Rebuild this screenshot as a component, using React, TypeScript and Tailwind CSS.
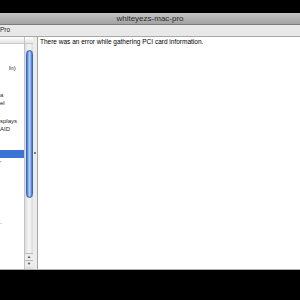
const SANS = "font-['Liberation_Sans','Helvetica',sans-serif]";

type Row = { h: number; text?: string; pl?: number; selected?: boolean };

const ROWS: Row[] = [
  { h: 20 },
  { h: 8, text: "ln)", pl: 9 },
  { h: 19 },
  { h: 8, text: "a" },
  { h: 8, text: "el" },
  { h: 10 },
  { h: 8, text: "splays" },
  { h: 8, text: "AID" },
  { h: 17 },
  { h: 8, selected: true },
  { h: 1 },
  { h: 8, text: "'" },
  { h: 52 },
  { h: 8, text: "·" },
];

function Scrollbar() {
  return (
    <div className="w-[9px] flex flex-col border-l border-[#c4c4c4] bg-[#f2f2f2]">
      {/* scroll corner above the bar */}
      <div className="h-[7px] shrink-0 border-b border-[#c8c8c8] bg-gradient-to-b from-white to-[#e4e4e4]" />
      {/* track */}
      <div className="flex-1 flex flex-col px-[1px] pt-[6px] bg-gradient-to-r from-[#dcdcdc] via-[#f7f7f7] to-[#dcdcdc]">
        <div className="h-[148px] w-[7px] rounded-full border border-[#3c64b8] bg-gradient-to-r from-[#4f7fd6] via-[#b4d3f8] to-[#4f7fd6] shadow-[inset_0_0_1px_#1f4aa0]" />
      </div>
      {/* arrows */}
      <div className="h-[7px] shrink-0 flex items-center justify-center border-t border-[#bcbcbc] bg-[#ececec] text-[4px] leading-none text-[#444]">
        ▲
      </div>
      <div className="h-[7px] shrink-0 flex items-center justify-center border-t border-[#bcbcbc] bg-[#ececec] text-[4px] leading-none text-[#444]">
        ▼
      </div>
      <div className="h-[2px] shrink-0 bg-[#e0e0e0]" />
    </div>
  );
}

export default function App() {
  return (
    <div className={`w-[300px] h-[300px] bg-black flex flex-col overflow-hidden ${SANS}`}>
      <div className="h-[13px] shrink-0 bg-black" />

      {/* Title bar */}
      <div className="h-[12px] shrink-0 flex items-center justify-center bg-gradient-to-b from-[#c4c4c4] to-[#a2a2a2] border-b border-[#7c7c7c]">
        <span className="text-[8px] leading-none text-[#2b2b2b]">whiteyezs-mac-pro</span>
      </div>

      {/* Path strip */}
      <div className="h-[12px] shrink-0 flex items-center bg-[#e8e8e8] border-b border-[#a8a8a8]">
        <span className="text-[6.5px] leading-none text-[#222]">Pro</span>
      </div>

      {/* Body */}
      <div className="flex-1 flex bg-[#e8e8e8] min-h-0">
        {/* Sidebar */}
        <div className="w-[33px] shrink-0 flex border-r border-[#8fb3e6] bg-white">
          <div className="w-[24px] shrink-0 flex flex-col overflow-hidden">
            <div className="h-[7px] shrink-0 border-b border-[#c8c8c8] bg-gradient-to-b from-white to-[#e4e4e4]" />
            {ROWS.map((r, i) => (
              <div
                key={i}
                style={{ height: r.h, paddingLeft: r.pl ?? 0 }}
                className={`shrink-0 flex items-center whitespace-nowrap text-[6px] leading-none ${
                  r.selected ? "bg-[#3b74d6] text-white" : "text-[#1e1e1e]"
                }`}
              >
                {r.text}
              </div>
            ))}
          </div>
          <Scrollbar />
        </div>

        {/* Splitter */}
        <div className="w-[4px] shrink-0 flex items-center justify-center bg-[#ececec]">
          <div className="w-[2px] h-[2px] rounded-full bg-[#555]" />
        </div>

        {/* Content */}
        <div className="flex-1 bg-white border-l border-[#a4a4a4] px-[2px] pt-[1px]">
          <p className="text-[6.5px] leading-[8px] text-black whitespace-nowrap">
            There was an error while gathering PCI card information.
          </p>
        </div>
      </div>

      <div className="h-px shrink-0 bg-[#b0b0b0]" />
      <div className="h-[30px] shrink-0 bg-black" />
    </div>
  );
}
